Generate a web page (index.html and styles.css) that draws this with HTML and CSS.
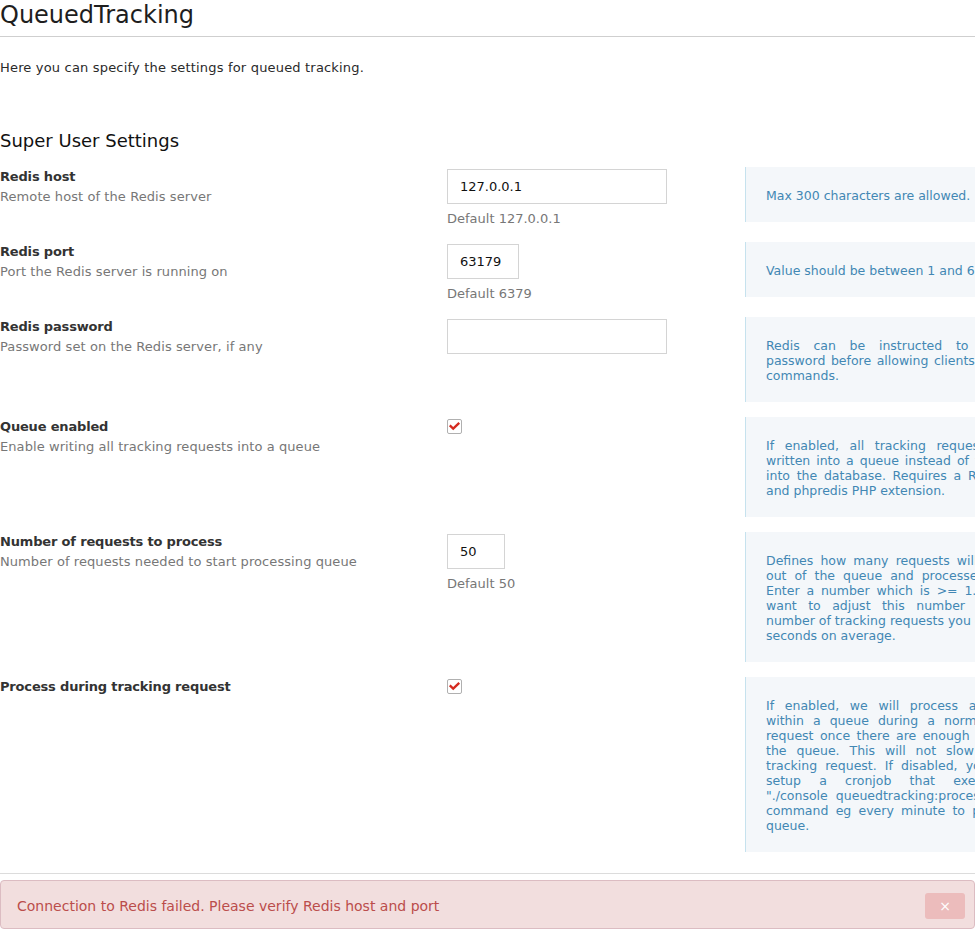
FILE: index.html
```html
<!DOCTYPE html>
<html lang="en">
<head>
<meta charset="utf-8">
<title>QueuedTracking</title>
<link rel="stylesheet" href="styles.css">
</head>
<body>
<div class="page">
  <h2 class="title">QueuedTracking</h2>
  <p class="intro">Here you can specify the settings for queued tracking.</p>
  <h3 class="section">Super User Settings</h3>

  <div class="settings">
    <div class="row">
      <div class="label-col">
        <div class="label">Redis host</div>
        <div class="desc">Remote host of the Redis server</div>
      </div>
      <div class="field-col">
        <input class="text w220" type="text" value="127.0.0.1">
        <div class="default">Default 127.0.0.1</div>
      </div>
      <div class="help"><span class="line">Max 300 characters are allowed.</span></div>
    </div>

    <div class="row">
      <div class="label-col">
        <div class="label">Redis port</div>
        <div class="desc">Port the Redis server is running on</div>
      </div>
      <div class="field-col">
        <input class="text w72" type="text" value="63179">
        <div class="default">Default 6379</div>
      </div>
      <div class="help"><span class="line">Value should be between 1 and 65535.</span></div>
    </div>

    <div class="row">
      <div class="label-col">
        <div class="label">Redis password</div>
        <div class="desc">Password set on the Redis server, if any</div>
      </div>
      <div class="field-col">
        <input class="text w220" type="password" value="">
      </div>
      <div class="help">
        <span class="line">Redis can be instructed to require a</span>
        <span class="line">password before allowing clients to execute</span>
        <span class="line">commands.</span>
      </div>
    </div>

    <div class="row">
      <div class="label-col">
        <div class="label">Queue enabled</div>
        <div class="desc">Enable writing all tracking requests into a queue</div>
      </div>
      <div class="field-col">
        <span class="checkbox"><svg viewBox="0 0 15 15" width="15" height="15"><path d="M3.6 7.2 L6.2 9.6 L11.4 4.6" fill="none" stroke="#d52b20" stroke-width="2.3" stroke-linecap="square"/></svg></span>
      </div>
      <div class="help">
        <span class="line">If enabled, all tracking requests will be</span>
        <span class="line">written into a queue instead of the directly</span>
        <span class="line">into the database. Requires a Redis server</span>
        <span class="line">and phpredis PHP extension.</span>
      </div>
    </div>

    <div class="row">
      <div class="label-col">
        <div class="label">Number of requests to process</div>
        <div class="desc">Number of requests needed to start processing queue</div>
      </div>
      <div class="field-col">
        <input class="text w58" type="text" value="50">
        <div class="default">Default 50</div>
      </div>
      <div class="help">
        <span class="line">Defines how many requests will be picked</span>
        <span class="line">out of the queue and processed at once.</span>
        <span class="line">Enter a number which is &gt;= 1. You might</span>
        <span class="line">want to adjust this number eg to the</span>
        <span class="line nowrap">number of tracking requests you get within 10</span>
        <span class="line">seconds on average.</span>
      </div>
    </div>

    <div class="row">
      <div class="label-col">
        <div class="label">Process during tracking request</div>
      </div>
      <div class="field-col">
        <span class="checkbox"><svg viewBox="0 0 15 15" width="15" height="15"><path d="M3.6 7.2 L6.2 9.6 L11.4 4.6" fill="none" stroke="#d52b20" stroke-width="2.3" stroke-linecap="square"/></svg></span>
      </div>
      <div class="help">
        <span class="line">If enabled, we will process all requests</span>
        <span class="line">within a queue during a normal tracking</span>
        <span class="line">request once there are enough requests in</span>
        <span class="line">the queue. This will not slow down the</span>
        <span class="line">tracking request. If disabled, you have to</span>
        <span class="line">setup a cronjob that executes the</span>
        <span class="line">"./console queuedtracking:process" console</span>
        <span class="line">command eg every minute to process the</span>
        <span class="line">queue.</span>
      </div>
    </div>
  </div>

  <hr class="divider">

  <div class="alert">
    <span class="alert-text">Connection to Redis failed. Please verify Redis host and port</span>
    <button class="close" type="button">×</button>
  </div>
</div>
</body>
</html>
```

FILE: styles.css
```css
html, body {
  margin: 0;
  padding: 0;
  overflow: hidden;
  background: #fff;
}

body {
  font-family: "DejaVu Sans", Verdana, sans-serif;
  color: #333;
}

.page {
  width: 975px;
}

.title {
  margin: 0;
  font-size: 24px;
  font-weight: normal;
  line-height: 30px;
  padding-bottom: 6px;
  border-bottom: 1px solid #cfcfcf;
  color: #1e1e1e;
}

.intro {
  margin: 21px 0 0 0;
  font-size: 13px;
  line-height: 20px;
  letter-spacing: 0.18px;
  color: #2a2a2a;
}

.section {
  margin: 51px 0 0 0;
  font-size: 18px;
  font-weight: normal;
  line-height: 24px;
  color: #111;
}

.settings {
  margin-top: 14px;
  width: 1068px;
}

.row {
  display: grid;
  grid-template-columns: 447px 298px 323px;
  align-items: start;
  margin-bottom: 15px;
}

.label {
  font-size: 13px;
  font-weight: bold;
  line-height: 20px;
  letter-spacing: -0.17px;
  color: #333;
}

.desc {
  font-size: 13px;
  line-height: 20px;
  letter-spacing: 0.08px;
  color: #777;
}

.field-col {
  padding-top: 2px;
}

.text {
  display: block;
  box-sizing: border-box;
  height: 35px;
  margin: 0;
  padding: 0 12px;
  border: 1px solid #d4d4d4;
  border-radius: 0;
  background: #fff;
  font-family: "DejaVu Sans", Verdana, sans-serif;
  font-size: 13px;
  color: #111;
  outline: none;
}

.w220 { width: 220px; }
.w72 { width: 72px; }
.w58 { width: 58px; }

.default {
  margin-top: 7px;
  font-size: 13px;
  line-height: 16px;
  color: #777;
}

.checkbox {
  display: block;
  box-sizing: border-box;
  width: 15px;
  height: 15px;
  border: 1px solid #b0b0b0;
  border-radius: 2px;
  background: #fff;
}

.checkbox svg {
  display: block;
  margin: -1px 0 0 -1px;
}

.help {
  background: #f4f7fa;
  border-left: 1px solid #c6e2ee;
  padding: 21px 20px 19px 20px;
  font-size: 12.5px;
  line-height: 15px;
  color: #4287b4;
}

.help .line {
  display: block;
  text-align: justify;
  text-align-last: justify;
}

.help .line:last-child {
  text-align-last: left;
}

.help .nowrap {
  white-space: nowrap;
}

.divider {
  margin: 21px 0 0 0;
  border: 0;
  border-top: 1px solid #dcdcdc;
  height: 0;
}

.alert {
  margin-top: 6px;
  box-sizing: border-box;
  width: 975px;
  height: 49px;
  display: flex;
  align-items: center;
  justify-content: space-between;
  padding: 2px 9px 0 16px;
  background: #f2dede;
  border: 1px solid #dcbcc2;
  border-radius: 4px;
  color: #bb4d4b;
  font-size: 14px;
}

.close {
  width: 40px;
  height: 26px;
  border: 0;
  border-radius: 3px;
  background: #ecbcbc;
  color: #fff;
  font-family: "DejaVu Sans", sans-serif;
  font-size: 14px;
  line-height: 26px;
  padding: 0;
}
```
